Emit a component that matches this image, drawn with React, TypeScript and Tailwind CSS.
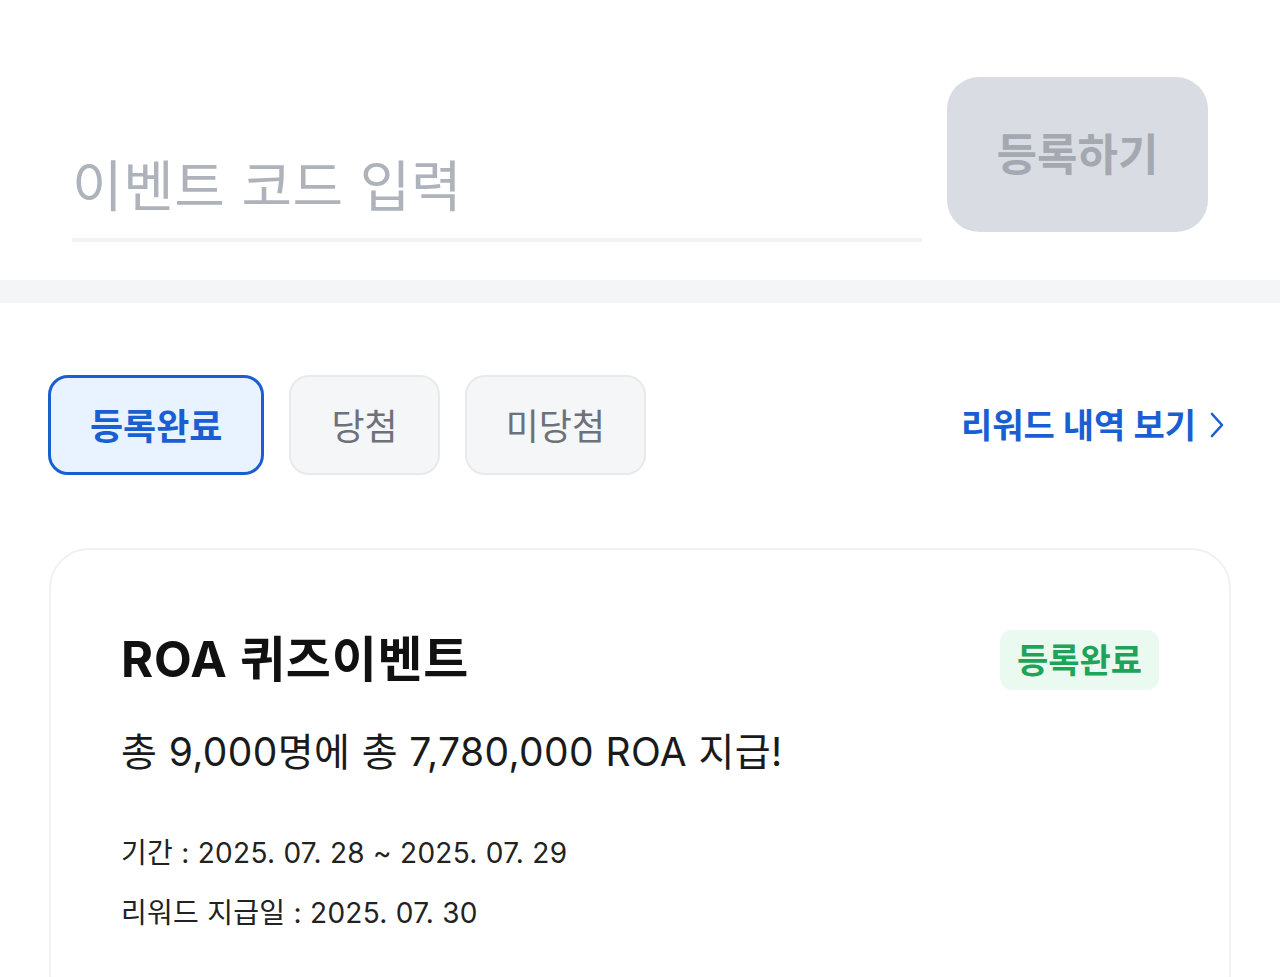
import React from "react";

const FONT = { fontFamily: 'Inter, "Noto Sans CJK KR", "Noto Sans", sans-serif' };

export default function App() {
  return (
    <div className="w-[1280px] min-h-[977px] bg-white overflow-hidden" style={FONT}>
      {/* Input section */}
      <div className="flex items-start gap-[25px] pl-[72px] pr-[72px] pt-[77px] pb-[38px]">
        <div className="flex-1 h-[165px] flex flex-col justify-end">
          <input
            className="w-full bg-transparent outline-none text-[55px] leading-[62px] tracking-[0.01em] text-[#1a1a1a] placeholder:text-[#aeb3bb]"
            placeholder="이벤트 코드 입력"
          />
          <div className="mt-[21px] h-[4px] bg-[#f2f3f5]" />
        </div>
        <button className="w-[261px] h-[155px] rounded-[32px] bg-[#d9dde3] text-[#a4a9b1] text-[44px] font-bold flex items-center justify-center">
          등록하기
        </button>
      </div>
      <div className="h-[23px] bg-[#f4f5f7]" />

      {/* Tabs */}
      <div className="flex items-center justify-between pl-[48px] pr-[56px] pt-[72px]">
        <div className="flex gap-[25px]">
          <button className="h-[100px] px-[39px] pt-[3px] rounded-[20px] border-[3px] border-[#1a5fd2] bg-[#e8f3ff] text-[#1a5fd2] text-[36px] font-bold">
            등록완료
          </button>
          <button className="h-[100px] px-[40px] pt-[3px] rounded-[20px] border-2 border-[#e8e9eb] bg-[#f5f6f8] text-[#6d7178] text-[36px]">
            당첨
          </button>
          <button className="h-[100px] px-[39px] pt-[3px] rounded-[20px] border-2 border-[#e8e9eb] bg-[#f5f6f8] text-[#6d7178] text-[36px]">
            미당첨
          </button>
        </div>
        <div className="flex items-center gap-[14px] text-[#1a5fd2] text-[34px] font-bold">
          <span>리워드 내역 보기</span>
          <svg width="14" height="26" viewBox="0 0 14 26" fill="none">
            <polyline points="2,2 12,13 2,24" stroke="#1a5fd2" strokeWidth="2.6" strokeLinecap="round" strokeLinejoin="round" />
          </svg>
        </div>
      </div>

      {/* Card */}
      <div className="mx-[49px] mt-[73px] rounded-[40px] border-2 border-[#f0f1f3] bg-white px-[70px] pt-[80px] pb-[80px]">
        <div className="flex items-center justify-between h-[60px]">
          <div className="text-[49px] font-bold text-[#111111] tracking-[0.015em] leading-[60px]">
            ROA 퀴즈이벤트
          </div>
          <div className="h-[60px] px-[17px] rounded-[12px] bg-[#ebfaf0] text-[#1ea458] text-[34px] font-bold flex items-center">
            등록완료
          </div>
        </div>
        <div className="mt-[37px] text-[39px] leading-[50px] text-[#1a1a1a] tracking-[0.01em]">
          총 9,000명에 총 7,780,000 ROA 지급!
        </div>
        <div className="mt-[56px] text-[28px] leading-[40px] text-[#222222] tracking-[0.01em]">
          기간 : 2025. 07. 28 ~ 2025. 07. 29
        </div>
        <div className="mt-[20px] text-[28px] leading-[40px] text-[#222222] tracking-[0.01em]">
          리워드 지급일 : 2025. 07. 30
        </div>
      </div>
    </div>
  );
}
